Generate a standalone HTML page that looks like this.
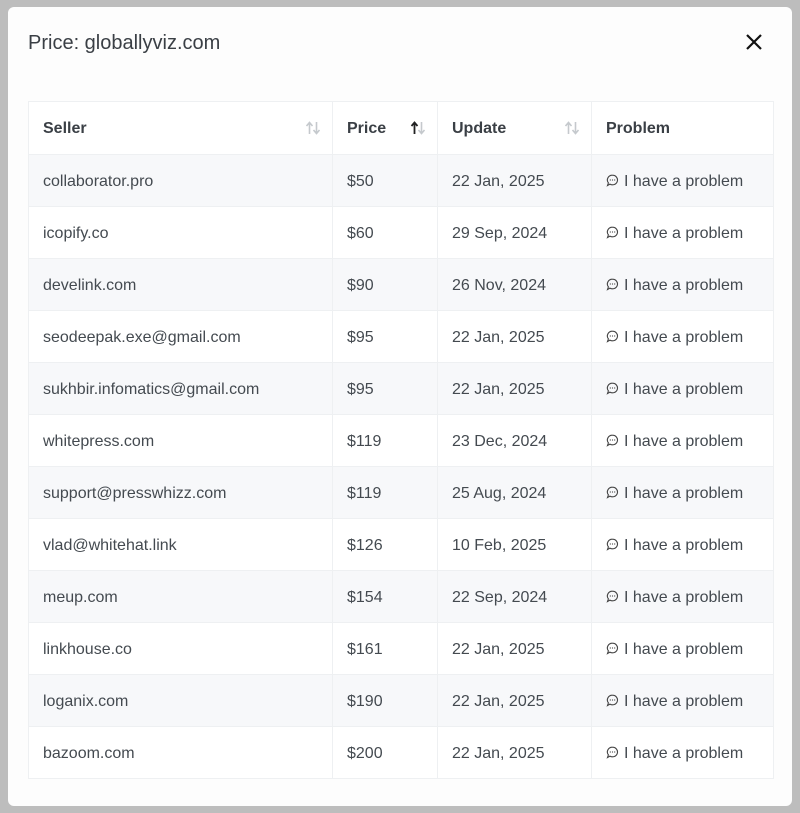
<!DOCTYPE html>
<html><head><style>
html,body{margin:0;padding:0;width:800px;height:813px;background:#bdbdbd;overflow:hidden;font-family:"Liberation Sans",sans-serif;}
.modal{position:absolute;left:8px;top:7px;width:784px;height:799px;background:#fdfdfd;border-radius:6px;}
.title{position:absolute;left:20px;top:25px;font-size:20px;color:#3a3f45;}
.close{position:absolute;left:737px;top:26px;}
table{position:absolute;left:20px;top:94px;border-collapse:collapse;width:746px;font-size:16px;color:#444a50;}
td,th{border:1px solid #eef0f2;padding:0 14px;text-align:left;}
td{padding-top:2px;height:49px;}
th{font-weight:bold;color:#3a3f45;background:#fff;height:51px;position:relative;padding-top:1px;}
tbody tr:nth-child(odd) td{background:#f7f8fa;}
tbody tr:nth-child(even) td{background:#fff;}
.s{position:absolute;right:11px;top:19px;}
.ic{display:inline-block;vertical-align:-1px;margin-right:5px;}
</style></head><body>
<div class="modal">
<div class="title">Price: globallyviz.com</div>
<svg class="close" width="18" height="18" viewBox="0 0 18 18"><path d="M2 2L16 16M16 2L2 16" stroke="#111" stroke-width="2.2"/></svg>
<table>
<colgroup><col style="width:304px"><col style="width:105px"><col style="width:154px"><col style="width:182px"></colgroup>
<thead><tr>
<th>Seller<svg class="s" width="16" height="14" viewBox="0 0 16 14"><path d="M4.5 13V2M1.5 5L4.5 1.5 7.5 5" fill="none" stroke="#c5c9cd" stroke-width="1.6"/><path d="M11.5 1V12M8.5 9L11.5 12.5 14.5 9" fill="none" stroke="#c5c9cd" stroke-width="1.6"/></svg></th>
<th>Price<svg class="s" width="16" height="14" viewBox="0 0 16 14"><path d="M4.5 13V2M1.5 5L4.5 1.5 7.5 5" fill="none" stroke="#222" stroke-width="1.8"/><path d="M11.5 1V12M8.5 9L11.5 12.5 14.5 9" fill="none" stroke="#c5c9cd" stroke-width="1.6"/></svg></th>
<th>Update<svg class="s" width="16" height="14" viewBox="0 0 16 14"><path d="M4.5 13V2M1.5 5L4.5 1.5 7.5 5" fill="none" stroke="#c5c9cd" stroke-width="1.6"/><path d="M11.5 1V12M8.5 9L11.5 12.5 14.5 9" fill="none" stroke="#c5c9cd" stroke-width="1.6"/></svg></th>
<th>Problem</th></tr></thead>
<tbody>
<tr><td>collaborator.pro</td><td>$50</td><td>22 Jan, 2025</td><td>P</td></tr>
<tr><td>icopify.co</td><td>$60</td><td>29 Sep, 2024</td><td>P</td></tr>
<tr><td>develink.com</td><td>$90</td><td>26 Nov, 2024</td><td>P</td></tr>
<tr><td>seodeepak.exe@gmail.com</td><td>$95</td><td>22 Jan, 2025</td><td>P</td></tr>
<tr><td>sukhbir.infomatics@gmail.com</td><td>$95</td><td>22 Jan, 2025</td><td>P</td></tr>
<tr><td>whitepress.com</td><td>$119</td><td>23 Dec, 2024</td><td>P</td></tr>
<tr><td>support@presswhizz.com</td><td>$119</td><td>25 Aug, 2024</td><td>P</td></tr>
<tr><td>vlad@whitehat.link</td><td>$126</td><td>10 Feb, 2025</td><td>P</td></tr>
<tr><td>meup.com</td><td>$154</td><td>22 Sep, 2024</td><td>P</td></tr>
<tr><td>linkhouse.co</td><td>$161</td><td>22 Jan, 2025</td><td>P</td></tr>
<tr><td>loganix.com</td><td>$190</td><td>22 Jan, 2025</td><td>P</td></tr>
<tr><td>bazoom.com</td><td>$200</td><td>22 Jan, 2025</td><td>P</td></tr>
</tbody></table>
</div>
<script>
document.querySelectorAll('tbody td:last-child').forEach(function(td){
td.innerHTML='<svg class="ic" width="13" height="13" viewBox="0 0 13 13"><path d="M6.5 1.2a5 4.8 0 1 1-2.6 8.9L1.5 11.5l.9-2.6A5 4.8 0 0 1 6.5 1.2z" fill="none" stroke="#444" stroke-width="1.1"/><circle cx="4.3" cy="6" r=".6" fill="#444"/><circle cx="6.5" cy="6" r=".6" fill="#444"/><circle cx="8.7" cy="6" r=".6" fill="#444"/></svg>I have a problem';
});
</script>
</body></html>
